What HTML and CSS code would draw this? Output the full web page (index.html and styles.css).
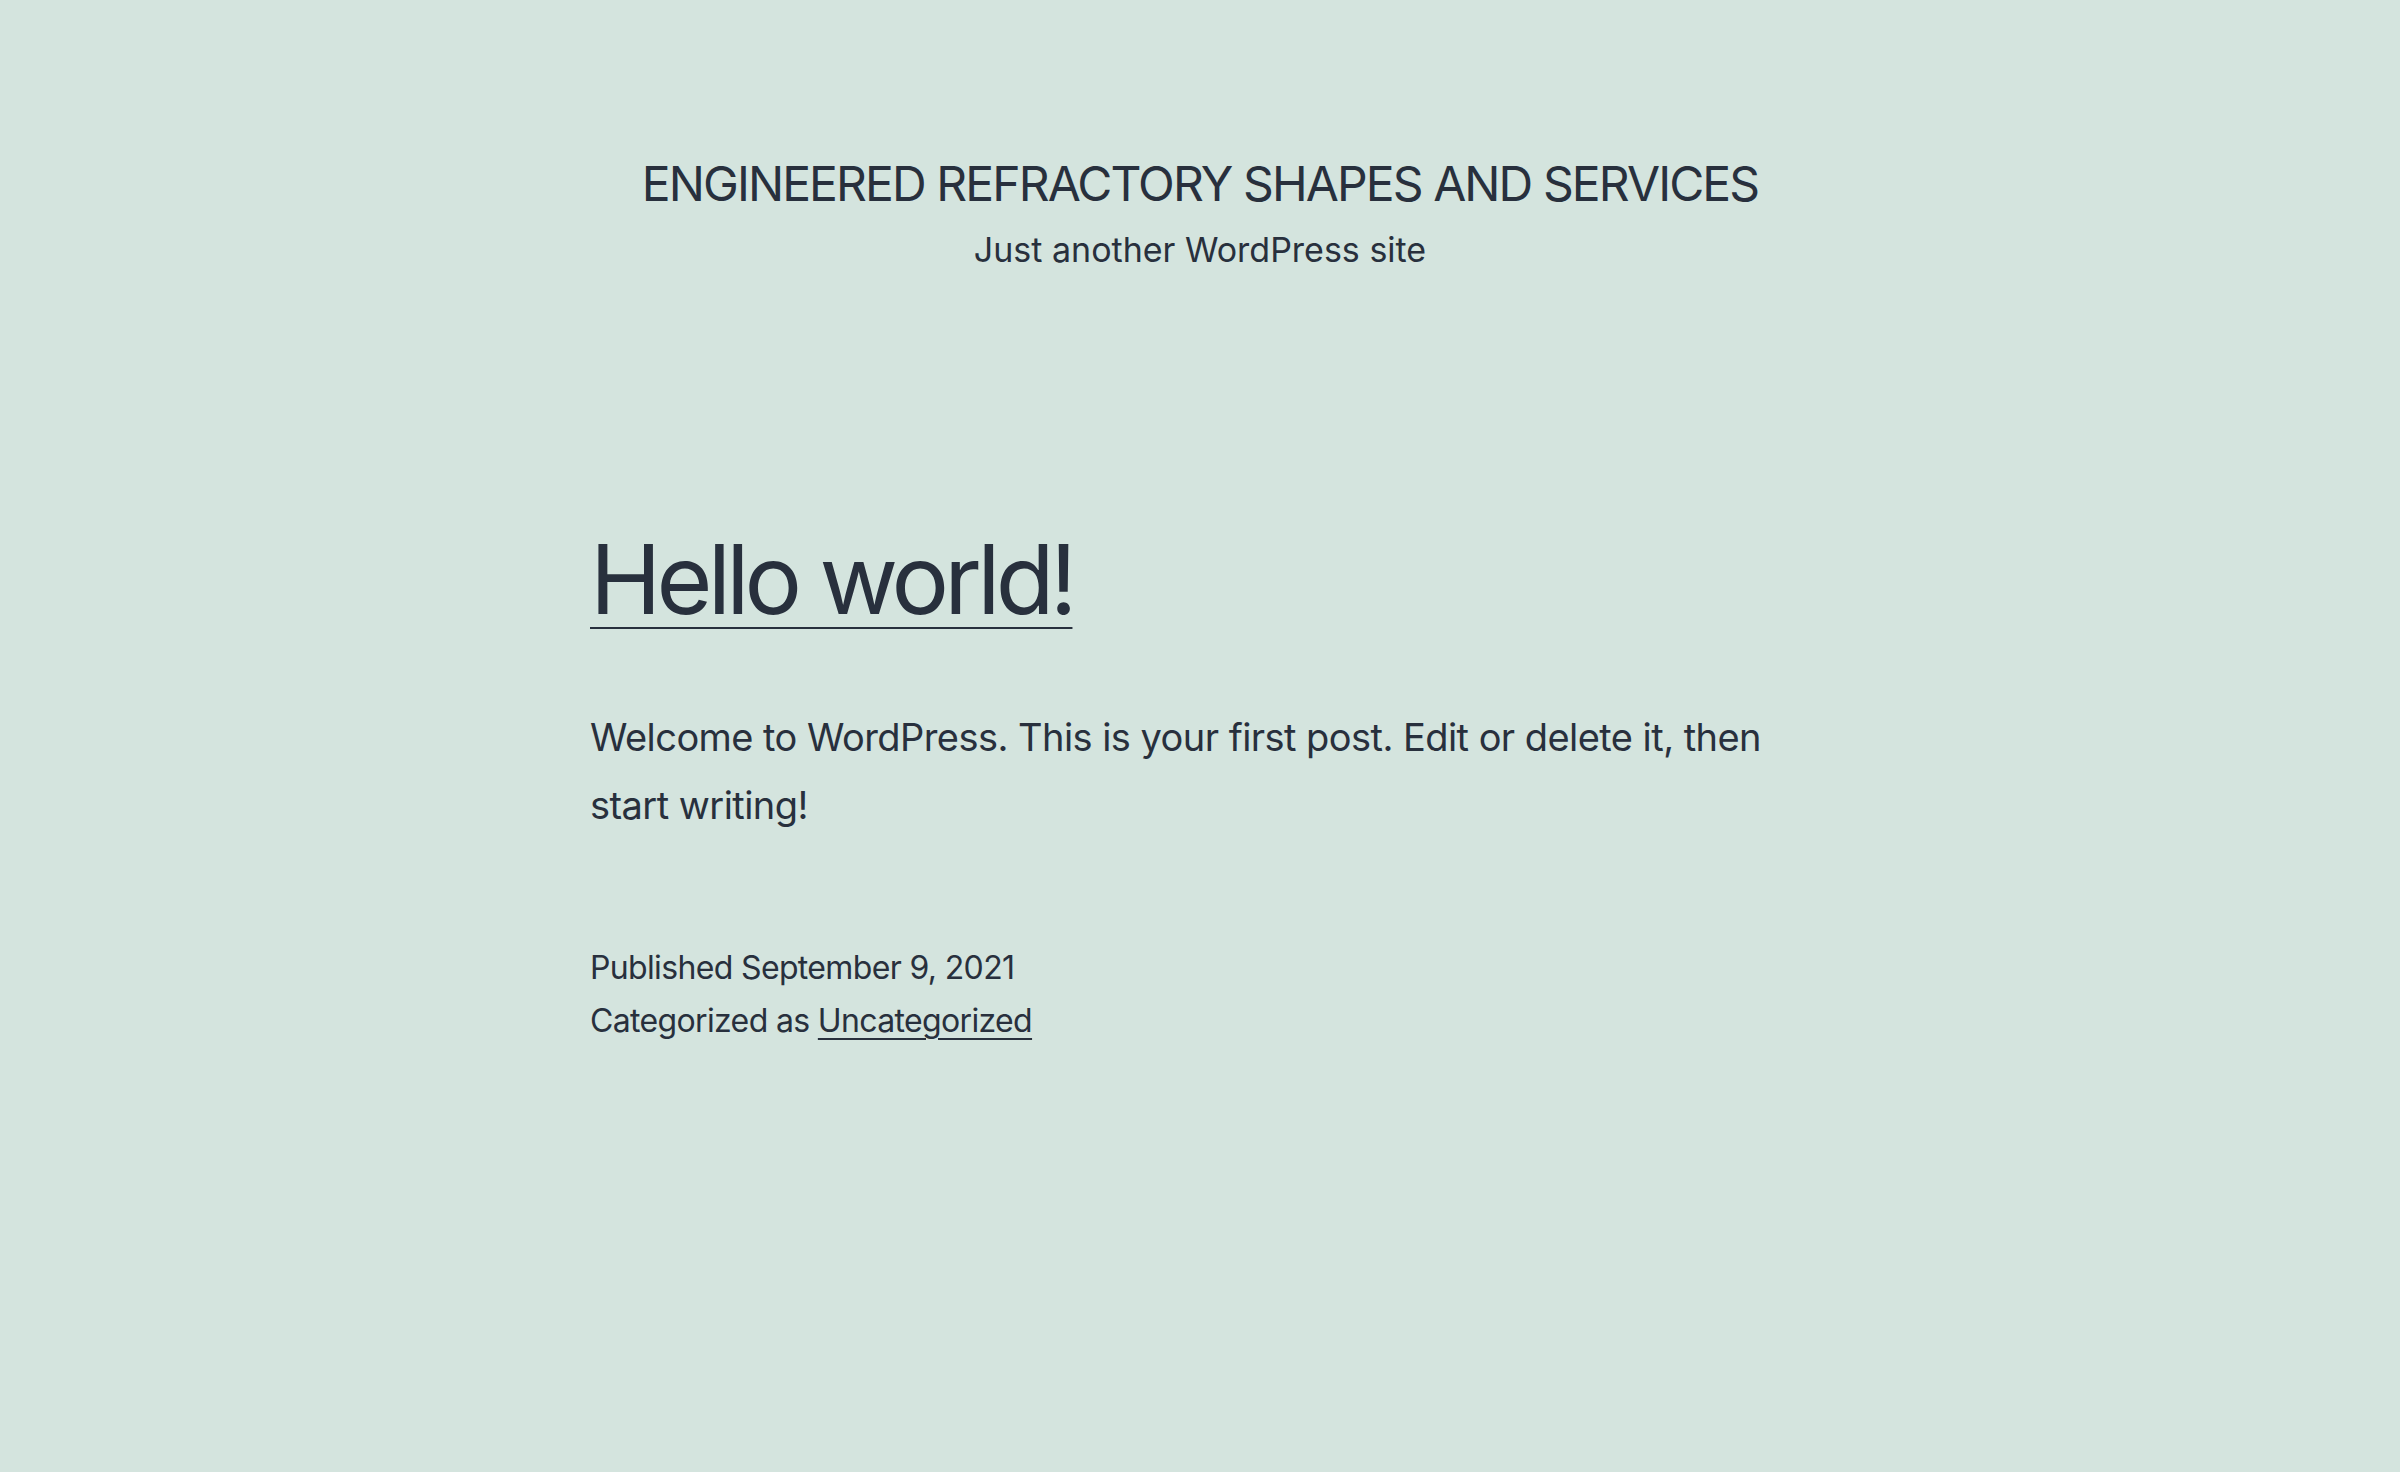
FILE: index.html
```html
<!DOCTYPE html>
<html lang="en">
<head>
<meta charset="utf-8">
<title>ENGINEERED REFRACTORY SHAPES AND SERVICES</title>
<link rel="stylesheet" href="styles.css">
</head>
<body>
<header class="site-header">
  <p class="site-title">ENGINEERED REFRACTORY SHAPES AND SERVICES</p>
  <p class="site-description">Just another WordPress site</p>
</header>
<main class="site-main">
  <article class="post">
    <h2 class="entry-title"><a href="#">Hello world!</a></h2>
    <div class="entry-content">
      <p>Welcome to WordPress. This is your first post. Edit or delete it, then start writing!</p>
    </div>
    <footer class="entry-footer">
      <div class="posted-on">Published September 9, 2021</div>
      <div class="cat-links">Categorized as <a href="#">Uncategorized</a></div>
    </footer>
  </article>
</main>
</body>
</html>
```

FILE: styles.css
```css
html, body {
  margin: 0;
  padding: 0;
}
body {
  background: #d4e4de;
  color: #28303d;
  font-family: Inter, "Noto Sans", sans-serif;
  min-height: 1472px;
}
a {
  color: #28303d;
}
.site-header {
  display: flex;
  flex-direction: column;
  align-items: center;
  padding-top: 153px;
}
.site-title {
  margin: 0;
  font-size: 48px;
  line-height: 1.3;
  font-weight: 400;
  letter-spacing: -1.9px;
}
.site-description {
  margin: 11px 0 0;
  font-size: 34px;
  line-height: 1.4;
}
.site-main {
  width: 1220px;
  margin: 0 auto;
  padding-top: 243px;
}
.entry-title {
  margin: 0;
  font-size: 96px;
  line-height: 1.3;
  font-weight: 400;
  letter-spacing: -4.8px;
}
.entry-title a {
  text-decoration: underline;
  text-decoration-thickness: 2px;
  text-underline-offset: 13px;
}
.entry-content p {
  margin: 61px 0 0;
  font-size: 38px;
  line-height: 68px;
  letter-spacing: -0.55px;
}
.entry-footer {
  margin-top: 102px;
  font-size: 32px;
  line-height: 53px;
  letter-spacing: -0.65px;
}
.entry-footer a {
  text-decoration-thickness: 2px;
  text-underline-offset: 6px;
}
```
